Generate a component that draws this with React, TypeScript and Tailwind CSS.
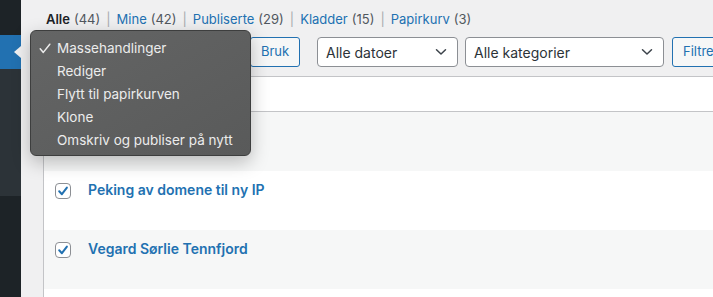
import React from "react";

const font = { fontFamily: "Inter, 'Noto Sans', sans-serif" };

function Chevron() {
  return (
    <svg width="12" height="8" viewBox="0 0 12 8" className="shrink-0">
      <path d="M1.5 1.8 L6 6 L10.5 1.8" fill="none" stroke="#3c434a" strokeWidth="1.5" strokeLinecap="round" strokeLinejoin="round" />
    </svg>
  );
}

function Select({ label, w }: { label: string; w: string }) {
  return (
    <div className={`${w} h-[30px] shrink-0 rounded-[4px] border border-[#8c8f94] bg-white flex items-center justify-between pl-[8px] pr-[10px] text-[14px] text-[#2c3338]`}>
      <span>{label}</span>
      <Chevron />
    </div>
  );
}

function Checkbox() {
  return (
    <div className="w-[16px] h-[16px] rounded-[4px] border border-[#8c8f94] bg-white flex items-center justify-center shrink-0">
      <svg width="12" height="12" viewBox="0 0 12 12">
        <path d="M2.2 6.3 L4.9 9.2 L9.9 2.6" fill="none" stroke="#2271b1" strokeWidth="2" strokeLinecap="round" strokeLinejoin="round" />
      </svg>
    </div>
  );
}

function Row({ title, striped }: { title?: string; striped: boolean }) {
  return (
    <div className={`h-[59px] flex items-start pl-[11px] ${striped ? "bg-[#f6f7f7]" : "bg-white"}`}>
      {title && (
        <>
          <div className="mt-[12px]"><Checkbox /></div>
          <div className="ml-[17px] mt-[10px] text-[14px] font-semibold text-[#2271b1] leading-[18px]">{title}</div>
        </>
      )}
    </div>
  );
}

export default function App() {
  const links: [string, string, boolean][] = [
    ["Alle", "(44)", true],
    ["Mine", "(42)", false],
    ["Publiserte", "(29)", false],
    ["Kladder", "(15)", false],
    ["Papirkurv", "(3)", false],
  ];
  const items = ["Massehandlinger", "Rediger", "Flytt til papirkurven", "Klone", "Omskriv og publiser på nytt"];
  return (
    <div style={font} className="relative w-[713px] h-[297px] overflow-hidden bg-[#f0f0f1] flex">
      {/* sidebar */}
      <div className="w-[21px] shrink-0 flex flex-col">
        <div className="h-[35px] bg-[#1d2327]" />
        <div className="h-[34px] bg-[#2271b1] relative">
          <div className="absolute right-0 top-[11px] w-0 h-0 border-y-[6px] border-y-transparent border-r-[7px] border-r-[#f0f0f1]" />
        </div>
        <div className="h-[127px] bg-[#2c3338]" />
        <div className="flex-1 bg-[#1d2327]" />
      </div>
      {/* main */}
      <div className="flex-1 flex flex-col pl-[22px]">
        <div className="h-[37px] pl-[3px] pt-[10px] text-[13px] leading-[18px] flex items-start whitespace-nowrap">
          {links.map(([name, count, cur], i) => (
            <span key={name} className="flex">
              {i > 0 && <span className="text-[#a7aaad] px-[6px]">|</span>}
              <span className={cur ? "font-semibold text-[#1d2327]" : "text-[#2271b1]"}>{name}</span>
              <span className="text-[#50575e] ml-[4px]">{count}</span>
            </span>
          ))}
        </div>
        <div className="h-[30px] pl-[3px] flex items-center whitespace-nowrap">
          <Select label="Massehandlinger" w="w-[196px]" />
          <div className="ml-[8px] w-[50px] h-[30px] shrink-0 rounded-[3px] border border-[#2271b1] bg-[#f6f7f7] text-[#2271b1] text-[13px] flex items-center justify-center">Bruk</div>
          <div className="ml-[17px]"><Select label="Alle datoer" w="w-[141px]" /></div>
          <div className="ml-[7px]"><Select label="Alle kategorier" w="w-[199px]" /></div>
          <div className="ml-[8px] w-[70px] h-[30px] shrink-0 rounded-[3px] border border-[#2271b1] bg-[#f6f7f7] text-[#2271b1] text-[13px] flex items-center pl-[10px]">Filtrer</div>
        </div>
        <div className="h-[9px]" />
        <div className="flex-1 border-l border-t border-[#c3c4c7] bg-white flex flex-col">
          <div className="h-[35px] bg-white border-b border-[#c3c4c7]" />
          <Row striped />
          <Row striped={false} title="Peking av domene til ny IP" />
          <Row striped title="Vegard Sørlie Tennfjord" />
          <div className="flex-1 bg-white" />
        </div>
      </div>
      {/* native dropdown menu */}
      <div className="absolute left-[30px] top-[30px] w-[221px] h-[126px] rounded-[6px] border border-[#3d3e3e] bg-gradient-to-br from-[#646565] to-[#595a5a] shadow-[0_6px_18px_rgba(0,0,0,0.25)] pt-[6px] text-[13.5px] text-[#ececec]">
        {items.map((t, i) => (
          <div key={t} className="h-[23px] flex items-center relative pl-[26px]">
            {i === 0 && (
              <svg width="12" height="11" viewBox="0 0 12 11" className="absolute left-[8px] top-[6px]">
                <path d="M1.2 5.8 L4.3 9.4 L10.8 1.2" fill="none" stroke="#ececec" strokeWidth="1.5" strokeLinecap="round" strokeLinejoin="round" />
              </svg>
            )}
            <span>{t}</span>
          </div>
        ))}
      </div>
    </div>
  );
}
